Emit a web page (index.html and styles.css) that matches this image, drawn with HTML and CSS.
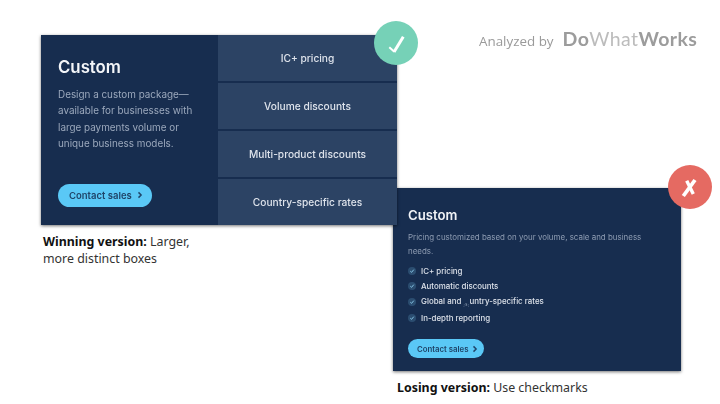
FILE: index.html
```html
<!DOCTYPE html>
<html lang="en">
<head>
<meta charset="utf-8">
<title>Custom pricing comparison</title>
<link rel="stylesheet" href="styles.css">
</head>
<body>
<main class="slide">
  <section class="win card">
    <div class="win-main">
      <h2 class="win-title">Custom</h2>
      <p class="win-desc">Design a custom package—available for businesses with large payments volume or unique business models.</p>
      <a class="btn win-btn">Contact sales <svg class="chev" viewBox="0 0 8 10"><path d="M2 1.5 5.500 5 2 8.500" fill="none" stroke="currentColor" stroke-width="1.900"/></svg></a>
    </div>
    <ul class="boxes">
      <li class="box">IC+ pricing</li>
      <li class="box">Volume discounts</li>
      <li class="box">Multi-product discounts</li>
      <li class="box">Country-specific rates</li>
    </ul>
  </section>

  <section class="lose card">
    <h2 class="lose-title">Custom</h2>
    <p class="lose-desc">Pricing customized based on your volume, scale and business needs.</p>
    <ul class="checks">
      <li class="check"><svg class="tick" viewBox="0 0 9 9"><circle cx="4.500" cy="4.500" r="4.500" fill="#2b4d70"/><path d="M2.600 4.700 4 6l2.500-3" fill="none" stroke="#8fd0f0" stroke-width="1"/></svg>IC+ pricing</li>
      <li class="check"><svg class="tick" viewBox="0 0 9 9"><circle cx="4.500" cy="4.500" r="4.500" fill="#2b4d70"/><path d="M2.600 4.700 4 6l2.500-3" fill="none" stroke="#8fd0f0" stroke-width="1"/></svg>Automatic discounts</li>
      <li class="check"><svg class="tick" viewBox="0 0 9 9"><circle cx="4.500" cy="4.500" r="4.500" fill="#2b4d70"/><path d="M2.600 4.700 4 6l2.500-3" fill="none" stroke="#8fd0f0" stroke-width="1"/></svg><span>Global and <span class="glitch">;s;</span>untry-specific rates</span></li>
      <li class="check"><svg class="tick" viewBox="0 0 9 9"><circle cx="4.500" cy="4.500" r="4.500" fill="#2b4d70"/><path d="M2.600 4.700 4 6l2.500-3" fill="none" stroke="#8fd0f0" stroke-width="1"/></svg>In-depth reporting</li>
    </ul>
    <a class="btn lose-btn">Contact sales <svg class="chev" viewBox="0 0 8 10"><path d="M2 1.500 5.500 5 2 8.500" fill="none" stroke="currentColor" stroke-width="1.900"/></svg></a>
  </section>

  <div class="badge badge-ok"><svg viewBox="0 0 44 44"><path d="M15.300 26.300 20.300 30.700" fill="none" stroke="#fff" stroke-width="2"/><path d="M20 31 29.300 15.700" fill="none" stroke="#fff" stroke-width="3"/></svg></div>
  <div class="badge badge-no"><svg viewBox="0 0 44 44"><path d="M27 15 15.300 31" fill="none" stroke="#fff" stroke-width="3.800"/><path d="M18.700 15.700 25.300 29" fill="none" stroke="#fff" stroke-width="3.400"/></svg></div>

  <div class="brand"><span class="brand-by">Analyzed by</span><span class="brand-name">Do<span class="brand-light">What</span>Works</span></div>

  <p class="caption cap-win"><b>Winning version:</b> Larger,<br>more distinct boxes</p>
  <p class="caption cap-lose"><b>Losing version:</b> Use checkmarks</p>
</main>
</body>
</html>
```
FILE: styles.css
```css
* { box-sizing: border-box; }
html, body { margin: 0; padding: 0; background: #fff; }
.slide { position: relative; width: 720px; height: 404px; overflow: hidden; font-family: Inter, "Liberation Sans", sans-serif; }
ul { list-style: none; margin: 0; padding: 0; }
h2, p { margin: 0; }

.card { position: absolute; background: #172d4f; box-shadow: 0 1px 3px rgba(0,0,0,.55); filter: blur(.35px); }

.win { z-index: 1; left: 41px; top: 35px; width: 356px; height: 190px; display: flex; }
.win-main { width: 177px; padding: 21px 0 0 17px; display: flex; flex-direction: column; align-items: flex-start; }
.win-title { font-size: 16.8px; line-height: 22px; font-weight: 600; color: #f4f6f9; }
.win-desc { margin-top: 8px; width: 145px; font-size: 9.9px; line-height: 16.4px; color: #9ba8bc; }
.win-btn { margin-top: 32px; }
.boxes { flex: 1; display: flex; flex-direction: column; justify-content: space-between; }
.box { height: 45.500px; display: flex; align-items: center; justify-content: center; background: #2c4364; color: #dfe4ec; font-size: 10.200px; font-weight: 500; }

.btn { display: inline-flex; align-items: center; gap: 5px; background: #5ac8f6; color: #1f4468; border-radius: 12px; font-weight: 600; }
.chev { width: 6px; height: 8px; }
.win-btn { height: 23px; padding: 0 9px 0 11px; font-size: 9.500px; }

.lose { left: 393px; top: 188px; width: 288px; height: 183px; padding: 18px 15px 0; }
.lose-title { font-size: 13.200px; line-height: 18px; font-weight: 600; color: #f1f3f7; }
.lose-desc { margin-top: 7px; width: 250px; font-size: 7.950px; line-height: 13.500px; color: #8f9db3; }
.checks { margin-top: 5px; display: flex; flex-direction: column; }
.check { height: 15.600px; display: flex; align-items: center; gap: 5px; font-size: 7.900px; font-weight: 500; color: #dde2ea; }
.tick { width: 8px; height: 8px; flex: none; }
.glitch { font-size: 4px; letter-spacing: .5px; color: #9aa8bc; vertical-align: -2px; }
.lose-btn { margin-top: 14px; height: 19px; padding: 0 6px 0 9px; gap: 4px; font-size: 7.800px; }

.badge { position: absolute; z-index: 2; width: 44px; height: 44px; border-radius: 50%; }
.badge svg { display: block; width: 44px; height: 44px; }
.badge-ok { left: 374px; top: 21px; background: #76d1b7; }
.badge-no { left: 668px; top: 165px; background: #e56a62; }

.brand { position: absolute; left: 479px; top: 27px; display: flex; align-items: baseline; gap: 9px; filter: blur(.4px); }
.brand-by { font-family: "Open Sans", sans-serif; font-size: 13.400px; color: #9a9a9a; }
.brand-name { font-family: Lato, sans-serif; font-size: 19.500px; font-weight: 700; letter-spacing: .4px; color: #9c9c9c; }
.brand-light { color: #bcbcbc; font-weight: 400; }

.caption { position: absolute; font-family: "Noto Sans", "Open Sans", sans-serif; font-size: 12.400px; line-height: 17px; color: #333; }
.caption b { font-weight: 700; color: #111; }
.cap-win { left: 43px; top: 233px; }
.cap-lose { left: 397px; top: 379px; }
```
